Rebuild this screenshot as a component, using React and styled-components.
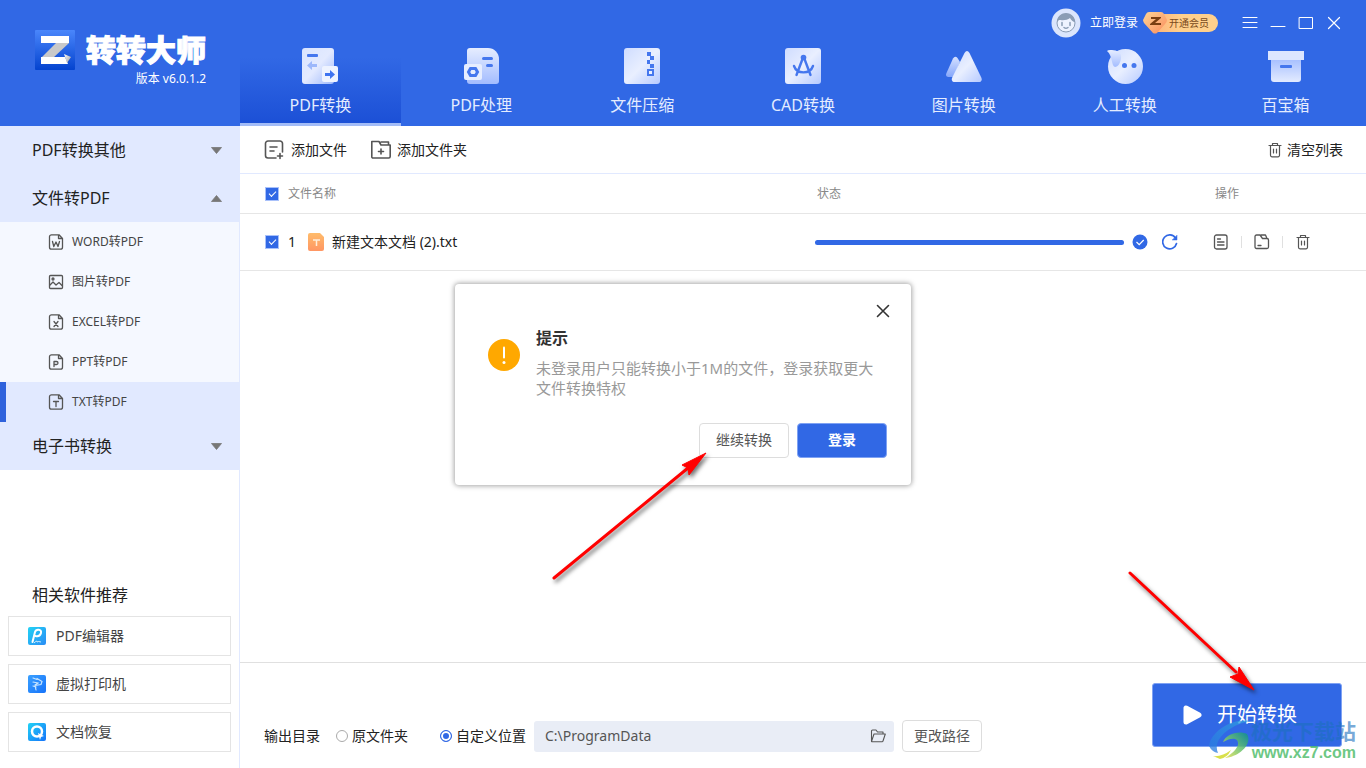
import React, { useState } from "react";
import styled, { createGlobalStyle } from "styled-components";

const GlobalStyle = createGlobalStyle`
	* {
		box-sizing: border-box;
	}

	body {
		margin: 0;
		background: #fff;
		color: #222;
		font-family: "Noto Sans", "Noto Sans CJK SC", sans-serif;
		font-size: 14px;
		line-height: 20px;
	}

	button, input {
		font-family: inherit;
		color: inherit;
	}

	svg {
		display: block;
		flex: none;
	}
`;

const Window = styled.div`
	position: relative;
	display: flex;
	flex-direction: column;
	min-height: 100vh;
	overflow: hidden;
`;

const Header = styled.header`
	display: flex;
	height: 126px;
	background: #3168e5;
	color: #fff;
`;

const Brand = styled.div`
	flex: none;
	display: flex;
	gap: 11px;
	width: 240px;
	padding: 30px 0 0 35px;
`;

const BrandName = styled.h1`
	margin: 0;
	font-size: 30px;
	font-weight: 900;
	line-height: 40px;
	-webkit-text-stroke: 1px #fff;
`;

const Version = styled.div`
	font-size: 12px;
	line-height: 18px;
	text-align: right;
`;

const HeaderMain = styled.div`
	flex: 1;
	display: flex;
	flex-direction: column;
`;

const TopBar = styled.div`
	display: flex;
	align-items: center;
	justify-content: flex-end;
	height: 46px;
	padding-right: 24px;
`;

const PlainButton = styled.button`
	display: flex;
	align-items: center;
	gap: ${(props) => props.$gap || "0"};
	padding: 0;
	border: none;
	background: none;
	font-size: ${(props) => props.$size || "14px"};
	line-height: 20px;
	cursor: pointer;
`;

const VipButton = styled.button`
	display: flex;
	align-items: center;
	gap: 2px;
	height: 22px;
	margin: 0 24px 0 5px;
	padding: 0;
	border: none;
	background: none;
	cursor: pointer;

	> svg {
		z-index: 1;
	}
`;

const VipLabel = styled.span`
	height: 18px;
	margin-left: -13px;
	padding: 0 9px 0 13px;
	border-radius: 0 9px 9px 0;
	background: linear-gradient(90deg, #fdb57a, #ffd08c 40%);
	color: #7a4a1c;
	font-size: 10px;
	line-height: 18px;
`;

const WindowButtons = styled.div`
	display: flex;
	gap: 12px;
`;

const Tabs = styled.nav`
	display: flex;
	height: 80px;
`;

const Tab = styled.button`
	flex: 1;
	display: flex;
	flex-direction: column;
	align-items: center;
	gap: 11px;
	padding: 2px 0 0;
	border: none;
	border-bottom: 3px solid ${(props) => (props.$active ? "#a3bcf7" : "transparent")};
	background: ${(props) =>
		props.$active ? "linear-gradient(180deg, #3168e5 15%, #1c50d6)" : "none"};
	color: #e4ecff;
	font-size: 16px;
	line-height: 20px;
	cursor: pointer;
`;

const Body = styled.div`
	flex: 1;
	display: flex;
`;

const Sidebar = styled.aside`
	flex: none;
	display: flex;
	flex-direction: column;
	justify-content: space-between;
	width: 240px;
	border-right: 1px solid #e1e9ff;
`;

const GroupButton = styled.button`
	display: flex;
	align-items: center;
	justify-content: space-between;
	width: 100%;
	height: 48px;
	padding: 0 17px 0 32px;
	border: none;
	background: #e1e9ff;
	font-size: 16px;
	line-height: 20px;
	cursor: pointer;
`;

const SubItem = styled.button`
	display: flex;
	align-items: center;
	gap: 8px;
	width: 100%;
	height: 40px;
	padding: 0 0 0 42px;
	border: none;
	border-left: 6px solid ${(props) => (props.$active ? "#2f62dc" : "transparent")};
	background: ${(props) => (props.$active ? "#e1e9ff" : "#f5f8ff")};
	color: #444;
	font-size: 12px;
	line-height: 20px;
	cursor: pointer;
`;

const Related = styled.section`
	display: flex;
	flex-direction: column;
	gap: 8px;
	padding: 0 8px 16px;
`;

const RelatedTitle = styled.h2`
	margin: 0 0 3px 24px;
	font-size: 16px;
	font-weight: 400;
	line-height: 20px;
`;

const RelatedLink = styled.a`
	display: flex;
	align-items: center;
	gap: 10px;
	height: 40px;
	padding-left: 19px;
	border: 1px solid #e4e4e4;
	color: #444;
	text-decoration: none;
`;

const Content = styled.main`
	flex: 1;
	display: flex;
	flex-direction: column;
	min-width: 0;
`;

const Toolbar = styled.div`
	display: flex;
	align-items: center;
	gap: 24px;
	height: 48px;
	padding: 0 23px 0 24px;
	border-bottom: 1px solid #e1e9ff;
`;

const Spacer = styled.div`
	flex: 1;
`;

const FileTable = styled.table`
	width: 100%;
	border-spacing: 0;
	table-layout: fixed;

	th {
		height: 40px;
		padding: 0 2px;
		border-bottom: 1px solid #e6e6e6;
		color: #888;
		font-size: 12px;
		font-weight: 400;
		text-align: left;
	}

	td {
		height: 57px;
		padding: 0;
		border-bottom: 1px solid #e6e6e6;
	}

	th:first-child, td:first-child {
		padding-left: 25px;
	}
`;

const Column = styled.col`
	width: ${(props) => props.$width};
`;

const Cell = styled.div`
	display: flex;
	align-items: center;
	gap: ${(props) => props.$gap || "8px"};
`;

const CheckBox = styled.input`
	appearance: none;
	flex: none;
	width: 14px;
	height: 14px;
	margin: 0;
	border: 1px solid #a9c1fa;
	background: #3168e5;
	cursor: pointer;

	&::before {
		content: "";
		display: block;
		width: 6px;
		height: 3px;
		margin: 3px auto 0;
		border: solid #fff;
		border-width: 0 0 1px 1px;
		transform: rotate(-45deg);
	}

	&:not(:checked) {
		background: #fff;
	}
`;

const Track = styled.div`
	width: 309px;
	height: 5px;
	border-radius: 3px;
	background: #e1e9ff;
`;

const TrackFill = styled.div`
	height: 100%;
	border-radius: 3px;
	background: #3168e5;
`;

const Divider = styled.span`
	width: 1px;
	height: 12px;
	background: #e0e0e0;
`;

const Footer = styled.footer`
	display: flex;
	align-items: flex-end;
	justify-content: space-between;
	height: 106px;
	margin-top: auto;
	padding: 0 24px 16px;
	border-top: 1px solid #e0e0e0;
`;

const OutputRow = styled.div`
	display: flex;
	align-items: center;
	gap: 8px;
	height: 32px;
`;

const OutputTitle = styled.span`
	margin-right: 8px;
`;

const RadioLabel = styled.label`
	display: flex;
	align-items: center;
	gap: 4px;
	margin-right: ${(props) => props.$after || "0"};
	cursor: pointer;
`;

const Radio = styled.input`
	appearance: none;
	width: 12px;
	height: 12px;
	margin: 0;
	border: 1px solid #aaa;
	border-radius: 50%;
	background: #fff;

	&:checked {
		border-color: #3168e5;
		background: #3168e5;
		box-shadow: inset 0 0 0 2px #fff;
	}
`;

const PathBox = styled.div`
	display: flex;
	align-items: center;
	width: 360px;
	height: 31px;
	padding: 0 8px 0 11px;
	border-radius: 3px;
	background: #e9edf6;
	color: #555;
`;

const PathInput = styled.input`
	flex: 1;
	min-width: 0;
	padding: 0;
	border: none;
	outline: none;
	background: none;
	font-size: 14px;
	line-height: 20px;
`;

const OutlineButton = styled.button`
	width: ${(props) => props.$width};
	height: ${(props) => props.$height};
	padding: 0;
	border: 1px solid #ddd;
	border-radius: 4px;
	background: #fff;
	color: #555;
	font-size: 14px;
	line-height: 20px;
	cursor: pointer;
`;

const PrimaryButton = styled(OutlineButton)`
	border-color: #7fa2f3;
	background: #3168e5;
	color: #fff;
	font-weight: 700;
`;

const StartButton = styled.button`
	display: flex;
	align-items: center;
	gap: 14px;
	width: 190px;
	height: 64px;
	margin-bottom: 5px;
	padding: 0 0 0 30px;
	border: 1px solid #7fa2f3;
	border-radius: 3px;
	background: #3168e5;
	color: #fff;
	font-size: 20px;
	line-height: 28px;
	cursor: pointer;
`;

const Overlay = styled.div`
	position: absolute;
	inset: 0;
	display: flex;
	align-items: center;
	justify-content: center;
	pointer-events: none;
`;

const Dialog = styled.div`
	width: 456px;
	padding: 19px 24px 27px 33px;
	border-radius: 4px;
	background: #fff;
	box-shadow: 0 0 5px 1px rgba(0, 0, 0, 0.35);
	pointer-events: auto;
`;

const DialogHead = styled.div`
	display: flex;
	align-items: flex-start;
	justify-content: flex-end;
	height: 25px;
	margin-right: -4px;
`;

const DialogBody = styled.div`
	display: flex;
	align-items: flex-start;
	gap: 16px;
	margin-bottom: 25px;

	> svg {
		margin-top: 11px;
	}
`;

const DialogTitle = styled.h2`
	margin: 0 0 10px;
	color: #333;
	font-size: 16px;
	font-weight: 700;
	line-height: 20px;
`;

const DialogText = styled.p`
	margin: 0;
	color: #999;
	font-size: 15px;
	line-height: 20px;
`;

const DialogActions = styled.div`
	display: flex;
	justify-content: flex-end;
	gap: 8px;
`;

const Arrow = styled.svg`
	position: absolute;
	left: ${(props) => props.$left};
	top: ${(props) => props.$top};
	overflow: visible;
	pointer-events: none;
	filter: drop-shadow(2px 3px 2px rgba(0, 0, 0, 0.55));
`;

const Watermark = styled.div`
	position: absolute;
	right: 10px;
	bottom: 6px;
	display: flex;
	align-items: center;
	pointer-events: none;
`;

const WatermarkName = styled.div`
	color: rgba(28, 112, 190, 0.62);
	font-size: 21px;
	font-weight: 700;
	line-height: 26px;
	text-align: right;
`;

const WatermarkSite = styled.div`
	color: rgba(70, 185, 100, 0.8);
	font-family: "Liberation Sans", sans-serif;
	font-size: 16px;
	font-weight: 700;
	line-height: 18px;
	text-align: right;
`;

const Logo = () => (
	<svg width="40" height="40" viewBox="0 0 40 40">
		<defs>
			<linearGradient id="logoBg" x1="0" y1="0" x2="0" y2="1">
				<stop offset="0" stopColor="#4a86fb" />
				<stop offset="1" stopColor="#0443cf" />
			</linearGradient>
			<linearGradient id="logoFold" x1="0" y1="0" x2="1" y2="1">
				<stop offset="0" stopColor="#fff" />
				<stop offset="1" stopColor="#9c9c9c" />
			</linearGradient>
		</defs>
		<rect width="40" height="40" rx="1" fill="url(#logoBg)" />
		<path d="M21 13h13L18 28H6z" fill="#c9c9c9" />
		<path d="M6 6h28v7H6zM6 27h24l3 7H6z" fill="#fff" />
		<path d="M29 24l7 3-4 6z" fill="url(#logoFold)" />
	</svg>
);

const TabDefs = () => (
	<svg width="0" height="0" aria-hidden="true">
		<defs>
			<linearGradient id="sheet" x1="0" y1="0" x2="1" y2="1">
				<stop offset="0" stopColor="#d9e4ff" />
				<stop offset="0.5" stopColor="#e3eaff" />
				<stop offset="1" stopColor="#9db8fb" />
			</linearGradient>
			<linearGradient id="tile" x1="0" y1="0" x2="1" y2="1">
				<stop offset="0" stopColor="#cfdcff" />
				<stop offset="0.5" stopColor="#e9efff" />
				<stop offset="1" stopColor="#b6caff" />
			</linearGradient>
			<linearGradient id="down" x1="0" y1="0" x2="0" y2="1">
				<stop offset="0" stopColor="#e6edff" />
				<stop offset="1" stopColor="#a3bcff" />
			</linearGradient>
			<linearGradient id="up" x1="0" y1="0" x2="0" y2="1">
				<stop offset="0" stopColor="#a9c1ff" />
				<stop offset="1" stopColor="#e3ebff" />
			</linearGradient>
			<linearGradient id="side" x1="0" y1="0" x2="0" y2="1">
				<stop offset="0" stopColor="#d5e0ff" />
				<stop offset="1" stopColor="#86a7fb" />
			</linearGradient>
		</defs>
	</svg>
);

const tabIcons = {
	convert: (
		<>
			<rect width="32" height="36" rx="3" fill="url(#sheet)" />
			<rect x="5" y="6" width="11" height="3" rx="1" fill="#4577ee" />
			<path d="M5 17.500l5-4.500v3h5v3h-5v3z" fill="#9db8fb" />
			<rect x="20" y="18" width="16" height="16" rx="2" fill="#eef3ff" />
			<path d="M33 26.500l-5-4.500v3h-5v3h5v3z" fill="#3f74f0" />
		</>
	),
	process: (
		<>
			<path d="M7 0h18a11 11 0 0 1 11 11v22a3 3 0 0 1-3 3H7a3 3 0 0 1-3-3V3a3 3 0 0 1 3-3z" fill="url(#down)" />
			<rect x="19" y="9" width="11" height="3" rx="1.500" fill="#4577ee" />
			<rect x="23" y="16" width="7" height="3" rx="1.500" fill="#4577ee" />
			<rect x="1" y="16" width="18" height="16" rx="2" fill="#e6edff" />
			<path d="M7.500 20.500h5l2 3.500-2 3.500h-5l-2-3.500z" fill="#e6edff" stroke="#4577ee" strokeWidth="3" />
		</>
	),
	zip: (
		<>
			<rect width="36" height="36" rx="3" fill="url(#tile)" />
			<path d="M23 4h4v4h3v4h-4v4h4v4h-4v-4h-3v-4h3V8h-3z" fill="#4577ee" />
			<rect x="24" y="22" width="5" height="5" fill="#e9efff" stroke="#4577ee" strokeWidth="2" />
		</>
	),
	cad: (
		<>
			<rect width="36" height="36" rx="3" fill="url(#tile)" />
			<circle cx="18.500" cy="9.500" r="2.800" fill="#4577ee" />
			<path d="M17.500 11L11.500 27M19.500 11l6 16M9 18c3 8.500 16 8.500 19 0" fill="none" stroke="#4577ee" strokeWidth="2.400" strokeLinecap="round" />
		</>
	),
	image: (
		<>
			<path d="M7 10.500q2-3 4.500-.5L14 14 8 29H2q-3-.5-1.500-4z" fill="url(#side)" />
			<path d="M18.500 5q2.500-4 5 0L35.500 30q1 4-3 4H9q-4 0-3-4z" fill="url(#tile)" />
		</>
	),
	human: (
		<>
			<circle cx="18.500" cy="18.500" r="17.500" fill="url(#tile)" />
			<path d="M0 3q1-1.500 5-1c5 .5 10 2 9 8-.5 5-3 9-6 9-4-1-2-11-8-16z" fill="url(#down)" />
			<circle cx="17.500" cy="17.500" r="2.500" fill="#4577ee" />
			<circle cx="27" cy="17.500" r="2.500" fill="#4577ee" />
		</>
	),
	box: (
		<>
			<path d="M3 12h30v19a3 3 0 0 1-3 3H6a3 3 0 0 1-3-3z" fill="url(#up)" />
			<rect y="3" width="36" height="9" fill="#dce6ff" />
			<rect x="12" y="17" width="12" height="3" rx="1" fill="#4577ee" />
		</>
	),
};

const Avatar = () => (
	<svg width="30" height="30" viewBox="0 0 30 30">
		<circle cx="15" cy="15" r="14.500" fill="#dbe5fc" />
		<circle cx="15" cy="15" r="9" fill="#eef3ff" stroke="#8b9db5" />
		<path d="M6 14c0-6 5-9 9-9s9 3 9 9c-2 0-4-2-5-4-3 3-9 2-11 2z" fill="#8b9db5" />
		<path d="M11 14.500v3M19 14.500v3M13 19.500q2 1.500 4 0" fill="none" stroke="#8b9db5" strokeWidth="1.500" strokeLinecap="round" />
	</svg>
);

const VipGem = () => (
	<svg width="24" height="22" viewBox="0 0 24 22">
		<defs>
			<linearGradient id="gem" x1="0" y1="0" x2="1" y2="1">
				<stop offset="0" stopColor="#ffd596" />
				<stop offset="1" stopColor="#f98b5c" />
			</linearGradient>
		</defs>
		<path d="M6 0h12q2 0 3 2l3 6q0 2-2 4l-8 9q-2 1-4 0L1 11Q0 9 0 8l3-6q1-2 3-2z" fill="url(#gem)" />
		<path d="M8 5h10v1l-6 5h6v2H7v-1l6-5H8z" fill="#7a3e12" />
	</svg>
);

const LineIcon = ({ size = 16, children, color = "#555", width = 1.3 }) => (
	<svg width={size} height={size} viewBox="0 0 16 16" fill="none" stroke={color} strokeWidth={width} strokeLinecap="round" strokeLinejoin="round">
		{children}
	</svg>
);

const DocIcon = ({ letter }) => (
	<LineIcon>
		<path d="M11 .8H3.500a2 2 0 0 0-2 2v10.400a2 2 0 0 0 2 2h9a2 2 0 0 0 2-2V4.500zM10.500 1v3.500h4" />
		{letter === "W" && <path d="M4.500 7.500l1.300 5L8 8l2 4.500 1.500-5" />}
		{letter === "X" && <path d="M6 7.500l4 5M10 7.500l-4 5" />}
		{letter === "P" && <path d="M6 12.500v-5h2.500a1.500 1.500 0 0 1 0 3H6" />}
		{letter === "T" && <path d="M5.500 7.500h5M8 7.500v5" />}
	</LineIcon>
);

const PictureIcon = () => (
	<LineIcon>
		<rect x="1.500" y="1.500" width="13" height="13" rx="1" />
		<circle cx="5" cy="5" r="1" />
		<path d="M2 11l3-3 3 3 3-2.500 3 3" />
	</LineIcon>
);

const TrashIcon = () => (
	<LineIcon width="1.200">
		<path d="M2 3.500h12M5.500 3.500v-2h5v2M3.500 3.500v9.800A1.500 1.500 0 0 0 5 14.800h6a1.500 1.500 0 0 0 1.500-1.500V3.500M6.500 7v4M9.500 7v4" />
	</LineIcon>
);

const AddFileIcon = () => (
	<svg width="20" height="20" viewBox="0 0 20 20" fill="none" stroke="#555" strokeWidth="1.600" strokeLinecap="round">
		<path d="M12 18H4a2.500 2.500 0 0 1-2.500-2.500v-12A2.500 2.500 0 0 1 4 1h12a2.500 2.500 0 0 1 2.500 2.500V12M6 7h7M6 11h4M16 13.500v5M13.500 16h5" />
	</svg>
);

const AddFolderIcon = () => (
	<svg width="20" height="20" viewBox="0 0 20 20" fill="none" stroke="#555" strokeWidth="1.600" strokeLinecap="round" strokeLinejoin="round">
		<path d="M.8 16V1.500h7.200L10 5h9.200v11.500a1.500 1.500 0 0 1-1.500 1.500H2.300A1.500 1.500 0 0 1 .8 16zM10 2h7.500v3M10 9v5M7.500 11.500h5" />
	</svg>
);

const FileBadge = () => (
	<svg width="16" height="18" viewBox="0 0 16 18">
		<defs>
			<linearGradient id="txt" x1="0" y1="0" x2="0" y2="1">
				<stop offset="0" stopColor="#ffbc6b" />
				<stop offset="1" stopColor="#ff9663" />
			</linearGradient>
		</defs>
		<path d="M2 0h10l4 4v12a2 2 0 0 1-2 2H2a2 2 0 0 1-2-2V2a2 2 0 0 1 2-2z" fill="url(#txt)" />
		<path d="M5 7h7M8.500 7v6" stroke="#ffeeda" strokeWidth="1.500" />
	</svg>
);

const Caret = ({ open }) => (
	<svg width="11" height="7" viewBox="0 0 11 7">
		<path d={open ? "M.5 6.500l5-6 5 6z" : "M.5 .5l5 6 5-6z"} fill="#777" stroke="#777" strokeWidth="0.800" strokeLinejoin="round" />
	</svg>
);

const RelatedIcon = ({ kind }) => (
	<svg width="18" height="18" viewBox="0 0 18 18">
		<defs>
			<linearGradient id={kind} x1="0" y1="0" x2="1" y2="1">
				<stop offset="0" stopColor={kind === "printer" ? "#3aa0ff" : "#22d3f5"} />
				<stop offset="1" stopColor={kind === "editor" ? "#2b8cf5" : "#1673fa"} />
			</linearGradient>
		</defs>
		<rect width="18" height="18" rx="2" fill={`url(#${kind})`} />
		{kind === "editor" && (
			<>
				<path d="M4.500 15L7 5c1-3.500 7-3 6 1-.8 3-3.500 3.500-5.500 3" fill="none" stroke="#fff" strokeWidth="2" strokeLinecap="round" />
				<path d="M6 16q3-3 3-1 1-1 4 0" fill="none" stroke="#fff" strokeWidth="0.800" />
			</>
		)}
		{kind === "printer" && (
			<path d="M5 3l4 1.500M9 3.500l5 3-1 3-6 1M5 7l5 1-3 2 1 5M5 11l3 1" fill="none" stroke="#c8e6ff" strokeWidth="1.200" strokeLinecap="round" />
		)}
		{kind === "restore" && (
			<>
				<circle cx="9" cy="8.500" r="5" fill="none" stroke="#fff" strokeWidth="2.500" />
				<path d="M10 10l6 3-3 1-1 3z" fill="#fff" />
			</>
		)}
	</svg>
);

const tabs = [
	{ name: "PDF转换", icon: "convert" },
	{ name: "PDF处理", icon: "process" },
	{ name: "文件压缩", icon: "zip" },
	{ name: "CAD转换", icon: "cad" },
	{ name: "图片转换", icon: "image" },
	{ name: "人工转换", icon: "human" },
	{ name: "百宝箱", icon: "box" },
];

const subItems = [
	{ name: "WORD转PDF", icon: <DocIcon letter="W" /> },
	{ name: "图片转PDF", icon: <PictureIcon /> },
	{ name: "EXCEL转PDF", icon: <DocIcon letter="X" /> },
	{ name: "PPT转PDF", icon: <DocIcon letter="P" /> },
	{ name: "TXT转PDF", icon: <DocIcon letter="T" /> },
];

const related = [
	{ name: "PDF编辑器", kind: "editor" },
	{ name: "虚拟打印机", kind: "printer" },
	{ name: "文档恢复", kind: "restore" },
];

const files = [{ id: 1, name: "新建文本文档 (2).txt", progress: 100 }];

const AppHeader = () => {
	const [active, setActive] = useState("convert");
	return (
		<Header>
			<Brand>
				<Logo />
				<div>
					<BrandName>转转大师</BrandName>
					<Version>版本 v6.0.1.2</Version>
				</div>
			</Brand>
			<HeaderMain>
				<TopBar>
					<PlainButton $gap='9px' $size='12px'>
						<Avatar />
						立即登录
					</PlainButton>
					<VipButton>
						<VipGem />
						<VipLabel>开通会员</VipLabel>
					</VipButton>
					<WindowButtons>
						<PlainButton aria-label='菜单'>
							<LineIcon color='#fff' width='1'>
								<path d="M1 2.500h14M1 7.500h14M1 12.500h14" />
							</LineIcon>
						</PlainButton>
						<PlainButton aria-label='最小化'>
							<LineIcon color='#fff' width='1'>
								<path d="M1 11.500h14" />
							</LineIcon>
						</PlainButton>
						<PlainButton aria-label='最大化'>
							<LineIcon color='#fff' width='1'>
								<rect x="1.500" y="2.500" width="13" height="11" />
							</LineIcon>
						</PlainButton>
						<PlainButton aria-label='关闭'>
							<LineIcon color='#fff' width='1.200'>
								<path d="M2.500 2.500l11 11M13.500 2.500l-11 11" />
							</LineIcon>
						</PlainButton>
					</WindowButtons>
				</TopBar>
				<Tabs>
					{tabs.map((tab) => (
						<Tab key={tab.icon} $active={tab.icon === active} onClick={() => setActive(tab.icon)}>
							<svg width="36" height="36" viewBox="0 0 36 36">
								{tabIcons[tab.icon]}
							</svg>
							{tab.name}
						</Tab>
					))}
				</Tabs>
			</HeaderMain>
		</Header>
	);
};

const AppSidebar = () => {
	const [selected, setSelected] = useState("TXT转PDF");
	return (
		<Sidebar>
			<div>
				<GroupButton>
					PDF转换其他
					<Caret />
				</GroupButton>
				<GroupButton>
					文件转PDF
					<Caret open />
				</GroupButton>
				{subItems.map((item) => (
					<SubItem key={item.name} $active={item.name === selected} onClick={() => setSelected(item.name)}>
						{item.icon}
						{item.name}
					</SubItem>
				))}
				<GroupButton>
					电子书转换
					<Caret />
				</GroupButton>
			</div>
			<Related>
				<RelatedTitle>相关软件推荐</RelatedTitle>
				{related.map((item) => (
					<RelatedLink key={item.kind} href='#'>
						<RelatedIcon kind={item.kind} />
						{item.name}
					</RelatedLink>
				))}
			</Related>
		</Sidebar>
	);
};

const FileList = () => (
	<FileTable>
		<colgroup>
			<Column />
			<Column $width='398px' />
			<Column $width='153px' />
		</colgroup>
		<thead>
			<tr>
				<th>
					<Cell $gap='9px'>
						<CheckBox type='checkbox' aria-label='全选' defaultChecked />
						文件名称
					</Cell>
				</th>
				<th>状态</th>
				<th>操作</th>
			</tr>
		</thead>
		<tbody>
			{files.map((file) => (
				<tr key={file.id}>
					<td>
						<Cell $gap='9px'>
							<CheckBox type='checkbox' aria-label={file.name} defaultChecked />
							<Cell $gap='12px'>
								<span>{file.id}</span>
								<Cell>
									<FileBadge />
									{file.name}
								</Cell>
							</Cell>
						</Cell>
					</td>
					<td>
						<Cell>
							<Track role='progressbar' aria-label='转换进度' aria-valuenow={file.progress}>
								<TrackFill style={{ width: `${file.progress}%` }} />
							</Track>
							<Cell $gap='14px'>
								<svg width="16" height="16" viewBox="0 0 16 16">
									<circle cx="8" cy="8" r="7.500" fill="#3168e5" />
									<path d="M4.500 8l2.700 2.700 4.500-4.700" fill="none" stroke="#fff" strokeWidth="1.200" />
								</svg>
								<PlainButton aria-label='重新转换'>
									<LineIcon color='#3168e5' width='1.700'>
										<path d="M14.500 9.500A7 7 0 1 1 13.500 4" />
										<path d="M15 1.500V6h-4.500z" fill="#3168e5" strokeWidth="0.500" />
									</LineIcon>
								</PlainButton>
							</Cell>
						</Cell>
					</td>
					<td>
						<Cell $gap='12px'>
							<PlainButton aria-label='打开文件'>
								<LineIcon>
									<rect x="1.500" y="1" width="12.500" height="14" rx="2" />
									<path d="M4.500 5h3M4.500 8h6.500M4.500 11h6.500" />
								</LineIcon>
							</PlainButton>
							<Divider />
							<PlainButton aria-label='打开文件夹'>
								<LineIcon>
									<path d="M1 13V2.500A1.500 1.500 0 0 1 2.500 1H6l2.500 3.500H13A1.500 1.500 0 0 1 14.500 6v7a1.500 1.500 0 0 1-1.500 1.500H2.500A1.500 1.500 0 0 1 1 13zM7 1h4.500L13 4.500M4 11.500h3" />
								</LineIcon>
							</PlainButton>
							<Divider />
							<PlainButton aria-label='删除'>
								<TrashIcon />
							</PlainButton>
						</Cell>
					</td>
				</tr>
			))}
		</tbody>
	</FileTable>
);

const OutputBar = () => (
	<Footer>
		<OutputRow>
			<OutputTitle>输出目录</OutputTitle>
			<RadioLabel $after='24px'>
				<Radio type='radio' name='output' />
				原文件夹
			</RadioLabel>
			<RadioLabel>
				<Radio type='radio' name='output' defaultChecked />
				自定义位置
			</RadioLabel>
			<PathBox>
				<PathInput aria-label='输出路径' defaultValue='C:\ProgramData' />
				<PlainButton aria-label='浏览'>
					<LineIcon width='1.100'>
						<path d="M1.500 13V3a1 1 0 0 1 1-1H6l1.500 2H13v2M1.500 13.500L4 6h11.300L13 13a1 1 0 0 1-1 .8H2z" />
					</LineIcon>
				</PlainButton>
			</PathBox>
			<OutlineButton $width='80px' $height='32px'>更改路径</OutlineButton>
		</OutputRow>
		<StartButton>
			<svg width="20" height="20" viewBox="0 0 20 20">
				<path d="M3 3v14l13-7z" fill="#fff" stroke="#fff" strokeWidth="5" strokeLinejoin="round" />
			</svg>
			开始转换
		</StartButton>
	</Footer>
);

const LoginDialog = () => (
	<Overlay>
		<Dialog role='dialog' aria-label='提示'>
			<DialogHead>
				<PlainButton aria-label='关闭'>
					<LineIcon color='#333' width='1.600'>
						<path d="M2.500 2.500l11 11M13.500 2.500l-11 11" />
					</LineIcon>
				</PlainButton>
			</DialogHead>
			<DialogBody>
				<svg width="32" height="32" viewBox="0 0 32 32">
					<circle cx="16" cy="16" r="16" fill="#ffa800" />
					<path d="M16 8.500v10" stroke="#fff" strokeWidth="2" strokeLinecap="round" />
					<circle cx="16" cy="23.500" r="1.500" fill="#fff" />
				</svg>
				<div>
					<DialogTitle>提示</DialogTitle>
					<DialogText>未登录用户只能转换小于1M的文件，登录获取更大文件转换特权</DialogText>
				</div>
			</DialogBody>
			<DialogActions>
				<OutlineButton $width='90px' $height='35px'>继续转换</OutlineButton>
				<PrimaryButton $width='90px' $height='35px'>登录</PrimaryButton>
			</DialogActions>
		</Dialog>
	</Overlay>
);

const App = () => (
	<>
		<GlobalStyle />
		<Window>
			<AppHeader />
			<Body>
				<AppSidebar />
				<Content>
					<Toolbar>
						<PlainButton $gap='7px'>
							<AddFileIcon />
							添加文件
						</PlainButton>
						<PlainButton $gap='6px'>
							<AddFolderIcon />
							添加文件夹
						</PlainButton>
						<Spacer />
						<PlainButton $gap='4px'>
							<TrashIcon />
							清空列表
						</PlainButton>
					</Toolbar>
					<FileList />
					<OutputBar />
				</Content>
			</Body>
			<LoginDialog />
			<Arrow $left='554px' $top='453px' width="152" height="125" viewBox="0 0 152 125">
				<path d="M0 125L134 15" stroke="#f00" strokeWidth="3" strokeLinecap="round" />
				<path d="M152 0l-24 12 6 3 1 7z" fill="#f00" stroke="#f00" />
			</Arrow>
			<Arrow $left='1130px' $top='573px' width="124" height="117" viewBox="0 0 124 117">
				<path d="M0 0l106 99" stroke="#f00" strokeWidth="3" strokeLinecap="round" />
				<path d="M124 117l-24-13 8-3 1-7z" fill="#f00" stroke="#f00" />
			</Arrow>
			<Watermark>
				<svg width="42" height="40" viewBox="0 0 42 40">
					<defs>
						<linearGradient id="swirl" x1="0" y1="1" x2="1" y2="0">
							<stop offset="0" stopColor="#2a78e0" />
							<stop offset="1" stopColor="#2f9fe0" />
						</linearGradient>
						<linearGradient id="tail" x1="0" y1="1" x2="1" y2="0">
							<stop offset="0" stopColor="#f3e04a" />
							<stop offset="0.500" stopColor="#6cc46a" />
							<stop offset="1" stopColor="#0c8f8a" />
						</linearGradient>
					</defs>
					<path d="M41 1C22-2 2 12 0 26q3 6 9 7C3 20 20 5 41 1z" fill="url(#swirl)" opacity="0.750" />
					<path d="M14 22C17 14 30 10 38 14c6 10-8 23-22 24 8-5 16-12 12-18-4-3-10 0-14 2z" fill="url(#tail)" opacity="0.850" />
					<path d="M4 36q9 1 18-6-4 8-11 9z" fill="#d9e04a" />
				</svg>
				<div>
					<WatermarkName>极光下载站</WatermarkName>
					<WatermarkSite>www.xz7.com</WatermarkSite>
				</div>
			</Watermark>
			<TabDefs />
		</Window>
	</>
);

export default App;
